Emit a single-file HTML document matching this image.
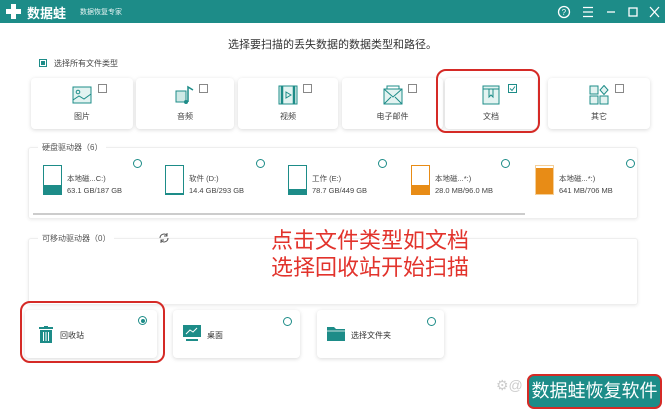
<!DOCTYPE html>
<html><head><meta charset="utf-8"><style>
*{margin:0;padding:0;box-sizing:border-box}
body{width:665px;height:415px;background:#fff;position:relative;overflow:hidden;font-family:"Liberation Sans","Noto Sans CJK SC",sans-serif;color:#333}
.a{position:absolute}
.hdr{left:0;top:0;width:665px;height:23px;background:#1d8c88}
.card{position:absolute;background:#fff;border-radius:4px;box-shadow:0 1px 4px rgba(0,0,0,.15)}
.cb{position:absolute;width:9px;height:9px;border:1px solid #888;background:#fff;top:6px;right:26px}
.lbl{position:absolute;width:100%;text-align:center;font-size:8px;top:33px;color:#444}
.ic{position:absolute;left:50%;top:7px;margin-left:-10px}
.box{position:absolute;border:1px solid #eee;border-radius:3px;box-shadow:0 1px 3px rgba(0,0,0,.08)}
.sec{position:absolute;font-size:8px;color:#555;background:#fff;padding:0 4px}
.drv{position:absolute;width:118px;height:40px}
.drv .d{position:absolute;left:0;top:0;width:19px;height:30px;border:1px solid #1d8c88;background:#fff}
.drv .f{position:absolute;left:0;bottom:0;width:100%}
.drv .t{position:absolute;left:24px;top:8px;font-size:7.5px;color:#444;line-height:12px}
.rad{position:absolute;width:9px;height:9px;border:1px solid #1d8c88;border-radius:50%}
.red{position:absolute;border:2px solid #d52a26;border-radius:10px}
</style></head><body>
<div class="a hdr"></div>
<svg class="a" style="left:5px;top:3px" width="17" height="17"><path d="M6 1h5v5h5v5h-5v5H6v-5H1V6h5z" fill="#fff"/></svg>
<div class="a" style="left:27px;top:3px;font-size:13px;font-weight:bold;color:#fff">数据蛙</div>
<div class="a" style="left:80px;top:7px;font-size:7px;color:#e6f4f3">数据恢复专家</div>
<svg class="a" style="left:557px;top:4px" width="105" height="16" fill="none" stroke="#fff" stroke-width="1.3">
<circle cx="7" cy="8" r="5.5"/><text x="4.6" y="11" font-size="8" fill="#fff" stroke="none" font-family="Liberation Sans">?</text>
<path d="M26 3.5h10M26 8h10M26 12.5h10"/><path d="M50 8h8"/><rect x="72" y="4" width="8" height="8"/><path d="M93 3l9 10M102 3l-9 10"/></svg>
<div class="a" style="left:0;width:665px;top:36px;text-align:center;font-size:11px;color:#333">选择要扫描的丢失数据的数据类型和路径。</div>
<div class="a" style="left:39px;top:59px;width:8px;height:8px;border:1px solid #1d8c88;background:#fff"><div style="margin:1px;width:4px;height:4px;background:#1d8c88"></div></div>
<div class="a" style="left:54px;top:58px;font-size:8px;color:#444">选择所有文件类型</div>

<div class="card" style="left:31px;top:78px;width:102px;height:51px"><div class="cb"></div><svg class="ic" width="20" height="20"><rect x="1" y="2" width="18" height="16" fill="#e3f3f1" stroke="#1d8c88"/><circle cx="6" cy="7" r="1.8" fill="none" stroke="#1d8c88"/><path d="M1 15l6-4 5 3 7-5" fill="none" stroke="#1d8c88"/></svg><div class="lbl">图片</div></div>
<div class="card" style="left:136px;top:78px;width:98px;height:51px"><div class="cb"></div><svg class="ic" width="20" height="20"><rect x="1" y="6" width="10" height="11" fill="#cfe9e6" stroke="#1d8c88"/><path d="M13 17V2l5 3" fill="none" stroke="#1d8c88" stroke-width="1.5"/><circle cx="11" cy="17" r="2" fill="#1d8c88"/></svg><div class="lbl">音频</div></div>
<div class="card" style="left:238px;top:78px;width:100px;height:51px"><div class="cb"></div><svg class="ic" width="20" height="20"><rect x="1" y="1" width="18" height="18" fill="#e3f3f1" stroke="#1d8c88"/><path d="M4 1v18M16 1v18" stroke="#1d8c88" stroke-width="2.5"/><path d="M8 7l5 3-5 3z" fill="none" stroke="#1d8c88"/></svg><div class="lbl">视频</div></div>
<div class="card" style="left:342px;top:78px;width:101px;height:51px"><div class="cb"></div><svg class="ic" width="20" height="20"><rect x="1" y="4" width="18" height="15" fill="#e3f3f1" stroke="#1d8c88"/><path d="M1 4l9 8 9-8M1 19l7-7M19 19l-7-7M4 4V1h12v3" fill="none" stroke="#1d8c88"/></svg><div class="lbl">电子邮件</div></div>
<div class="card" style="left:445px;top:78px;width:92px;height:51px"><div class="cb" style="right:20px;border-color:#1d8c88"><svg width="7" height="7" style="position:absolute;left:0;top:0"><path d="M1 3.5l2 2 3-4" fill="none" stroke="#1d8c88" stroke-width="1"/></svg></div><svg class="ic" width="20" height="20"><rect x="2" y="1" width="16" height="18" fill="#e3f3f1" stroke="#1d8c88"/><path d="M2 4h16M8 4v8l2-2 2 2V4" fill="none" stroke="#1d8c88"/></svg><div class="lbl">文档</div></div>
<div class="card" style="left:548px;top:78px;width:102px;height:51px"><div class="cb"></div><svg class="ic" width="20" height="20" fill="#e3f3f1" stroke="#1d8c88"><rect x="1" y="1" width="8" height="8"/><path d="M15 0.5l4 4.5-4 4.5-4-4.5z"/><rect x="1" y="11" width="8" height="8"/><rect x="11" y="11" width="8" height="8"/></svg><div class="lbl">其它</div></div>
<div class="red" style="left:436px;top:69px;width:104px;height:64px"></div>

<div class="box" style="left:28px;top:147px;width:610px;height:72px"></div>
<div class="sec" style="left:38px;top:142px">硬盘驱动器（6）</div>
<div class="drv" style="left:43px;top:165px"><div class="d"><div class="f" style="height:9px;background:#1d8c88"></div></div><div class="t">本地磁...C:)<br>63.1 GB/187 GB</div></div>
<div class="drv" style="left:165px;top:165px"><div class="d"><div class="f" style="height:1px;background:#1d8c88"></div></div><div class="t">软件 (D:)<br>14.4 GB/293 GB</div></div>
<div class="drv" style="left:288px;top:165px"><div class="d"><div class="f" style="height:5px;background:#1d8c88"></div></div><div class="t">工作 (E:)<br>78.7 GB/449 GB</div></div>
<div class="drv" style="left:411px;top:165px"><div class="d" style="border-color:#e88c16"><div class="f" style="height:9px;background:#e88c16"></div></div><div class="t">本地磁...*:)<br>28.0 MB/96.0 MB</div></div>
<div class="drv" style="left:535px;top:165px"><div class="d" style="border-color:#f5cf97"><div class="f" style="height:26px;background:#e88c16"></div></div><div class="t">本地磁...*:)<br>641 MB/706 MB</div></div>
<div class="rad" style="left:133px;top:159px"></div><div class="rad" style="left:256px;top:159px"></div><div class="rad" style="left:378px;top:159px"></div><div class="rad" style="left:501px;top:159px"></div><div class="rad" style="left:626px;top:159px"></div>
<div class="a" style="left:33px;top:213px;width:492px;height:2px;background:#ccc"></div>

<div class="box" style="left:28px;top:238px;width:610px;height:67px"></div>
<div class="sec" style="left:38px;top:233px">可移动驱动器（0）</div>
<svg class="a" style="left:158px;top:232px" width="12" height="12" fill="none" stroke="#555"><path d="M2 6a4 4 0 0 1 7-2.6M10 6a4 4 0 0 1-7 2.6"/><path d="M9 1v3H6M3 11V8h3"/></svg>
<div class="a" style="left:260px;top:227px;font-size:22px;line-height:27px;color:#e2332c;text-align:center;width:220px">点击文件类型如文档<br>选择回收站开始扫描</div>

<div class="card" style="left:25px;top:310px;width:132px;height:48px"><svg style="position:absolute;left:14px;top:16px" width="14" height="17"><rect x="0" y="1" width="14" height="2" fill="#1d8c88"/><rect x="5" y="0" width="4" height="2" fill="#1d8c88"/><rect x="1" y="4" width="12" height="13" fill="#1d8c88"/><path d="M4.5 6v9M7 6v9M9.5 6v9" stroke="#fff"/></svg><div style="position:absolute;left:35px;top:20px;font-size:8px">回收站</div><div class="rad" style="left:113px;top:6px"><div style="margin:1.5px;width:4px;height:4px;border-radius:50%;background:#1d8c88"></div></div></div>
<div class="red" style="left:20px;top:301px;width:145px;height:62px"></div>
<div class="card" style="left:173px;top:310px;width:127px;height:48px"><svg style="position:absolute;left:10px;top:15px" width="18" height="16"><rect x="0" y="0" width="18" height="12" fill="#1d8c88"/><path d="M3 9l4-4 3 2 4-4" fill="none" stroke="#fff"/><rect x="3" y="14" width="12" height="2" fill="#1d8c88"/></svg><div style="position:absolute;left:34px;top:20px;font-size:8px">桌面</div><div class="rad" style="left:110px;top:7px"></div></div>
<div class="card" style="left:317px;top:310px;width:127px;height:48px"><svg style="position:absolute;left:10px;top:15px" width="18" height="16"><path d="M0 2h7l2 2h9v12H0z" fill="#1d8c88"/><path d="M0 6h18" stroke="#fff" stroke-width=".8"/></svg><div style="position:absolute;left:34px;top:20px;font-size:8px">选择文件夹</div><div class="rad" style="left:110px;top:7px"></div></div>

<div class="a" style="left:496px;top:377px;font-size:14px;color:#ccc">⚙@</div>
<div class="a" style="left:527px;top:374px;width:135px;height:35px;border:2px solid #d52a26;border-radius:7px;background:#1d8c88;color:#fff;font-size:18px;line-height:30px;text-align:center">数据蛙恢复软件</div>
</body></html>
